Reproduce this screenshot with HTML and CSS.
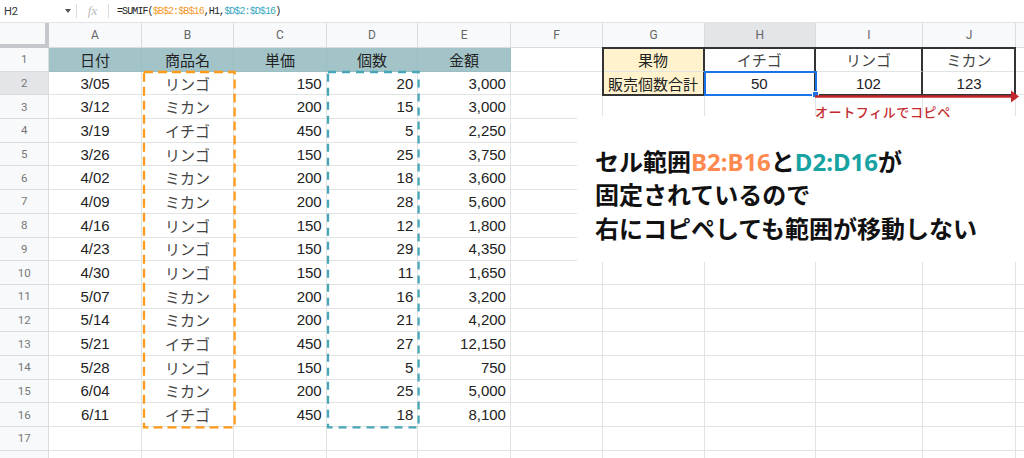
FILE: index.html
```html
<!DOCTYPE html>
<html lang="ja">
<head>
<meta charset="utf-8">
<title>SUMIF 絶対参照</title>
<link rel="stylesheet" href="styles.css">
</head>
<body>
<div class="fbar">
  <div class="namebox"><span class="ref">H2</span><svg class="caret" width="6" height="4" viewBox="0 0 6 4"><path d="M0 0h6L3 4z" fill="#555"/></svg></div>
  <div class="sep"></div>
  <div class="fx">fx</div>
  <div class="sep"></div>
  <div class="formula">=SUMIF(<span class="fo">$B$2:$B$16</span>,H1,<span class="fb">$D$2:$D$16</span>)</div>
</div>
<div class="sheet">
  <div class="c corner"></div><div class="c h">A</div><div class="c h">B</div><div class="c h">C</div><div class="c h">D</div><div class="c h">E</div><div class="c h">F</div><div class="c h">G</div><div class="c h hs">H</div><div class="c h">I</div><div class="c h">J</div><div class="c h"></div>

  <div class="c n">1</div><div class="c t ct">日付</div><div class="c t ct">商品名</div><div class="c t ct">単価</div><div class="c t ct">個数</div><div class="c t ct">金額</div><div class="c"></div><div class="c y ct bk">果物</div><div class="c ct bk jp">イチゴ</div><div class="c ct bk jp">リンゴ</div><div class="c ct jp">ミカン</div><div class="c"></div>

  <div class="c n hs">2</div><div class="c ct">3/05</div><div class="c ct jp">リンゴ</div><div class="c rt">150</div><div class="c rt">20</div><div class="c rt">3,000</div><div class="c"></div><div class="c y ct bk">販売個数合計</div><div class="c ct bk">50</div><div class="c ct bk">102</div><div class="c ct">123</div><div class="c"></div>

  <div class="c n">3</div><div class="c ct">3/12</div><div class="c ct jp">ミカン</div><div class="c rt">200</div><div class="c rt">15</div><div class="c rt">3,000</div><div class="c"></div><div class="c"></div><div class="c"></div><div class="c"></div><div class="c"></div><div class="c"></div>
  <div class="c n">4</div><div class="c ct">3/19</div><div class="c ct jp">イチゴ</div><div class="c rt">450</div><div class="c rt">5</div><div class="c rt">2,250</div><div class="c"></div><div class="c"></div><div class="c"></div><div class="c"></div><div class="c"></div><div class="c"></div>
  <div class="c n">5</div><div class="c ct">3/26</div><div class="c ct jp">リンゴ</div><div class="c rt">150</div><div class="c rt">25</div><div class="c rt">3,750</div><div class="c"></div><div class="c"></div><div class="c"></div><div class="c"></div><div class="c"></div><div class="c"></div>
  <div class="c n">6</div><div class="c ct">4/02</div><div class="c ct jp">ミカン</div><div class="c rt">200</div><div class="c rt">18</div><div class="c rt">3,600</div><div class="c"></div><div class="c"></div><div class="c"></div><div class="c"></div><div class="c"></div><div class="c"></div>
  <div class="c n">7</div><div class="c ct">4/09</div><div class="c ct jp">ミカン</div><div class="c rt">200</div><div class="c rt">28</div><div class="c rt">5,600</div><div class="c"></div><div class="c"></div><div class="c"></div><div class="c"></div><div class="c"></div><div class="c"></div>
  <div class="c n">8</div><div class="c ct">4/16</div><div class="c ct jp">リンゴ</div><div class="c rt">150</div><div class="c rt">12</div><div class="c rt">1,800</div><div class="c"></div><div class="c"></div><div class="c"></div><div class="c"></div><div class="c"></div><div class="c"></div>
  <div class="c n">9</div><div class="c ct">4/23</div><div class="c ct jp">リンゴ</div><div class="c rt">150</div><div class="c rt">29</div><div class="c rt">4,350</div><div class="c"></div><div class="c"></div><div class="c"></div><div class="c"></div><div class="c"></div><div class="c"></div>
  <div class="c n">10</div><div class="c ct">4/30</div><div class="c ct jp">リンゴ</div><div class="c rt">150</div><div class="c rt">11</div><div class="c rt">1,650</div><div class="c"></div><div class="c"></div><div class="c"></div><div class="c"></div><div class="c"></div><div class="c"></div>
  <div class="c n">11</div><div class="c ct">5/07</div><div class="c ct jp">ミカン</div><div class="c rt">200</div><div class="c rt">16</div><div class="c rt">3,200</div><div class="c"></div><div class="c"></div><div class="c"></div><div class="c"></div><div class="c"></div><div class="c"></div>
  <div class="c n">12</div><div class="c ct">5/14</div><div class="c ct jp">ミカン</div><div class="c rt">200</div><div class="c rt">21</div><div class="c rt">4,200</div><div class="c"></div><div class="c"></div><div class="c"></div><div class="c"></div><div class="c"></div><div class="c"></div>
  <div class="c n">13</div><div class="c ct">5/21</div><div class="c ct jp">イチゴ</div><div class="c rt">450</div><div class="c rt">27</div><div class="c rt">12,150</div><div class="c"></div><div class="c"></div><div class="c"></div><div class="c"></div><div class="c"></div><div class="c"></div>
  <div class="c n">14</div><div class="c ct">5/28</div><div class="c ct jp">リンゴ</div><div class="c rt">150</div><div class="c rt">5</div><div class="c rt">750</div><div class="c"></div><div class="c"></div><div class="c"></div><div class="c"></div><div class="c"></div><div class="c"></div>
  <div class="c n">15</div><div class="c ct">6/04</div><div class="c ct jp">ミカン</div><div class="c rt">200</div><div class="c rt">25</div><div class="c rt">5,000</div><div class="c"></div><div class="c"></div><div class="c"></div><div class="c"></div><div class="c"></div><div class="c"></div>
  <div class="c n">16</div><div class="c ct">6/11</div><div class="c ct jp">イチゴ</div><div class="c rt">450</div><div class="c rt">18</div><div class="c rt">8,100</div><div class="c"></div><div class="c"></div><div class="c"></div><div class="c"></div><div class="c"></div><div class="c"></div>
  <div class="c n">17</div><div class="c"></div><div class="c"></div><div class="c"></div><div class="c"></div><div class="c"></div><div class="c"></div><div class="c"></div><div class="c"></div><div class="c"></div><div class="c"></div><div class="c"></div>
  <div class="c n last">18</div><div class="c"></div><div class="c"></div><div class="c"></div><div class="c"></div><div class="c"></div><div class="c"></div><div class="c"></div><div class="c"></div><div class="c"></div><div class="c"></div><div class="c"></div>

  <div class="range range-b"><svg class="dash"><rect width="100%" height="100%"/></svg></div>
  <div class="range range-d"><svg class="dash"><rect width="100%" height="100%"/></svg></div>
  <div class="frame"></div>
  <div class="select"><span class="handle"></span></div>
  <svg class="arrow" width="212" height="20" viewBox="0 0 212 20"><path d="M3 9.5H201" stroke="#c0272d" stroke-width="2.6"/><path d="M199 3.6L207 9.5 199 15.4z" fill="#c0272d"/></svg>
  <div class="note">
    <p>セル範囲<span class="oc">B2:B16</span>と<span class="tc">D2:D16</span>が</p>
    <p>固定されているので</p>
    <p>右にコピペしても範囲が移動しない</p>
  </div>
  <div class="label">オートフィルでコピペ</div>
</div>
</body>
</html>
```
FILE: styles.css
```css
html, body {
  margin: 0;
  padding: 0;
  background: #fff;
  overflow: hidden;
}
body {
  width: 1024px;
  height: 458px;
  font-family: "Liberation Sans", "Noto Sans CJK JP", sans-serif;
}

/* formula bar */
.fbar {
  height: 22px;
  border-bottom: 1px solid #e1e3e6;
  display: flex;
  align-items: center;
}
.namebox {
  width: 76px;
  display: flex;
  align-items: center;
  padding-left: 4px;
  box-sizing: border-box;
}
.ref {
  font: 11px Roboto, "Liberation Sans", sans-serif;
  color: #333;
  flex: 1;
}
.caret {
  margin-right: 5px;
}
.sep {
  width: 1px;
  height: 14px;
  background: #dadce0;
}
.fx {
  width: 31px;
  text-align: center;
  font: italic 13px "Liberation Serif", serif;
  color: #bbb;
}
.formula {
  padding-left: 8px;
  font: 10px "Liberation Mono", monospace;
  letter-spacing: -0.9px;
  color: #222;
  white-space: nowrap;
}
.fo { color: #f39a2c; }
.fb { color: #3aa8c1; }

/* sheet grid */
.sheet {
  position: relative;
  display: grid;
  grid-template-columns: 49.3px 92.4px 92.6px 92.4px 91.6px 92.7px 92.3px 101.7px 110.7px 107.6px 92.7px 100px;
  grid-template-rows: 25px repeat(18, 23.7px);
}
.c {
  box-sizing: border-box;
  border-right: 1px solid #e2e3e3;
  border-bottom: 1px solid #e2e3e3;
  display: flex;
  align-items: center;
  padding: 0 4px;
  font-size: 15px;
  color: #222;
  white-space: nowrap;
  overflow: hidden;
}
.ct { justify-content: center; }
.rt { justify-content: flex-end; }
.jp { color: #444; }
.h, .n, .corner {
  background: #f8f9fa;
  color: #666;
  font: 12px Roboto, "Liberation Sans", sans-serif;
  justify-content: center;
  border-color: #dadce0;
}
.n { font-size: 11.5px; color: #777; }
.n.last { align-items: flex-start; padding-top: 6px; }
.corner {
  border-right: 4px solid #c4c7cb;
  border-bottom: 4px solid #c4c7cb;
}
.hs { background: #e3e5e8; }
.t {
  background: #a2c4c9;
  border-right-color: #9bbec3;
  border-bottom-color: #9bbec3;
  color: #222;
}
.y { background: #fff2cc; }
.bk { border-right: 2px solid #333; }

/* overlays */
.range {
  position: absolute;
  grid-row: 3 / 18;
  top: 0;
  bottom: 0;
  right: 0;
  left: 1px;
  pointer-events: none;
}
.range-b { grid-column: 3 / 4; left: 2px; }
.range-d { grid-column: 5 / 6; }
.dash {
  width: 100%;
  height: 100%;
  overflow: visible;
  display: block;
}
.dash rect {
  fill: none;
  stroke-width: 2.3;
}
.range-b rect { stroke: #ff9a1a; stroke-dasharray: 9 5; }
.range-d rect { stroke: #47a7b6; stroke-dasharray: 8 6; }

.frame {
  position: absolute;
  grid-column: 8 / 12;
  grid-row: 2 / 4;
  top: -1px;
  bottom: -1px;
  left: -1px;
  right: 0;
  border: 2px solid #333;
}
.select {
  position: absolute;
  grid-column: 9 / 10;
  grid-row: 3 / 4;
  top: -1px;
  bottom: -1px;
  left: -1px;
  right: -1px;
  border: 2px solid #1a73e8;
}
.handle {
  position: absolute;
  right: -4px;
  bottom: -4px;
  width: 5px;
  height: 5px;
  background: #1a73e8;
  border: 1px solid #fff;
}
.arrow {
  position: absolute;
  left: 812px;
  top: 64px;
}
.label {
  position: absolute;
  left: 815px;
  top: 81px;
  font: 500 13px "Noto Sans CJK JP", sans-serif;
  line-height: 16px;
  letter-spacing: 0.6px;
  color: #c42b2f;
  z-index: 2;
}
.note {
  position: absolute;
  left: 577px;
  top: 93px;
  width: 447px;
  height: 146px;
  background: #fff;
  box-sizing: border-box;
  padding: 29px 0 0 18px;
  font: 700 24px "Noto Sans", "Noto Sans CJK JP", sans-serif;
  line-height: 33.3px;
  color: #111;
  z-index: 1;
}
.note p { margin: 0; white-space: nowrap; }
.oc { color: #ff8a50; }
.tc { color: #18a3a3; }
```
